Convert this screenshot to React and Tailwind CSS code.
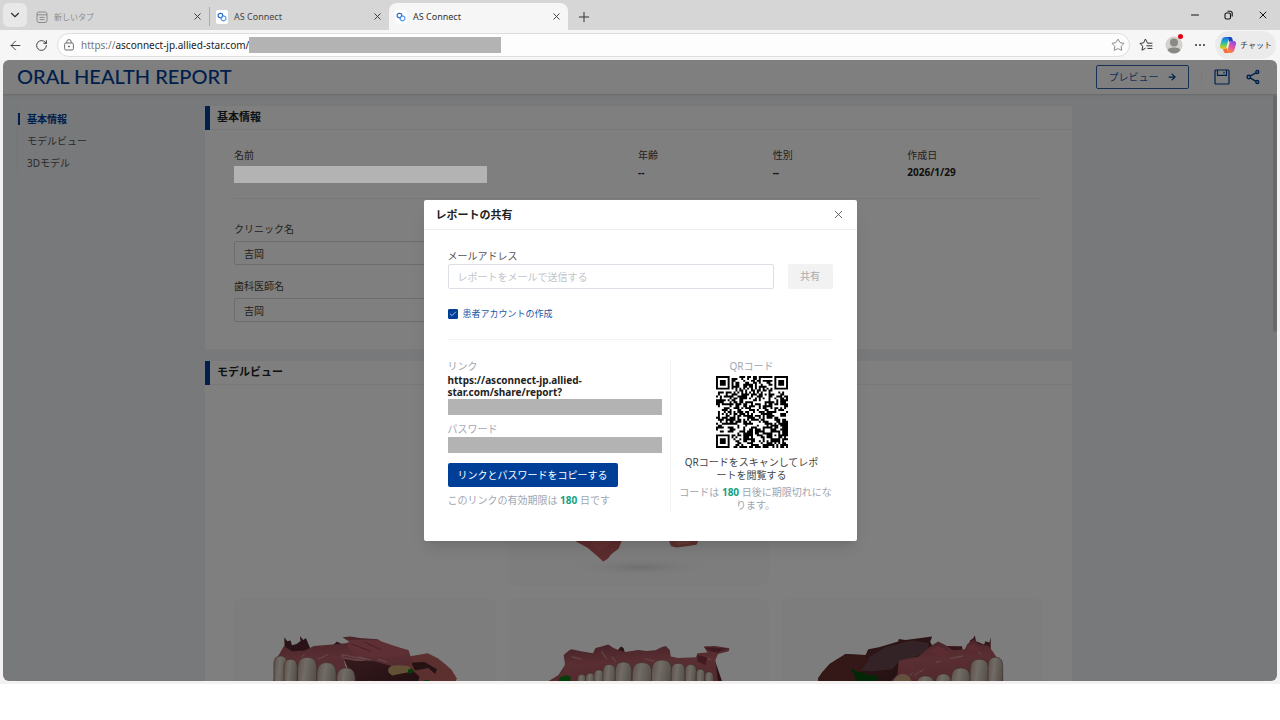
import { useState } from 'react';
import { ArrowLeft, ArrowRight, Check, ChevronDown, Minus, Plus, RotateCw, Star, X } from 'lucide-react';

const TABS = [
  { id: 'new', title: '新しいタブ', blank: true },
  { id: 'report', title: 'AS Connect' },
  { id: 'share', title: 'AS Connect', active: true },
];

const SECTIONS = ['基本情報', 'モデルビュー', '3Dモデル'];

const QR_SIZE = 37;

function inBox(x, y, left, top, size) {
  return x >= left && x < left + size && y >= top && y < top + size;
}

function ring(x, y, cx, cy) {
  return Math.max(Math.abs(x - cx), Math.abs(y - cy));
}

function buildQr() {
  let seed = 20260129;
  const next = () => {
    seed = (seed * 1103515245 + 12345) % 2147483648;
    return seed / 2147483648;
  };
  const last = QR_SIZE - 4;
  const finders = [[3, 3], [last, 3], [3, last]];
  let d = '';
  for (let y = 0; y < QR_SIZE; y++) {
    for (let x = 0; x < QR_SIZE; x++) {
      let dark = next() > 0.47;
      if (inBox(x, y, 13, 9, 3) || inBox(x, y, 5, 21, 4) || inBox(x, y, 26, 18, 3) || inBox(x, y, 14, 29, 3) || inBox(x, y, 34, 26, 4)) dark = true;
      if (x === 6 || y === 6) dark = (x + y) % 2 === 0;
      finders.forEach(([cx, cy]) => {
        const r = ring(x, y, cx, cy);
        if (r <= 4) dark = r !== 2 && r !== 4;
      });
      const align = ring(x, y, 30, 30);
      if (align <= 2) dark = align !== 1;
      if (dark) d += `M${x} ${y}h1v1h-1z`;
    }
  }
  return d;
}

const qrPath = buildQr();

function QrCode() {
  return (
    <svg viewBox="0 0 37 37" className="size-[72px]" role="img" aria-label="QRコード">
      <path d={qrPath} fill="#000" />
    </svg>
  );
}

function ConnectIcon() {
  return (
    <svg viewBox="0 0 12 14" className="h-3.5 w-3 shrink-0">
      <rect width="12" height="14" rx="2" fill="#fff" />
      <path d="M4.3 3.2 6.6 4v2.6L4.5 8 2.2 6.7V4.3z" fill="none" stroke="#1c5fc4" strokeWidth="1.1" strokeLinejoin="round" />
      <path d="M7.5 5.8 9.8 7v2.6L7.6 11 5.3 9.8V7.2z" fill="none" stroke="#4b93ee" strokeWidth="1.1" strokeLinejoin="round" />
    </svg>
  );
}

function PageIcon() {
  return (
    <svg viewBox="0 0 12 12" className="size-3 shrink-0" fill="none" stroke="#8a8a8a">
      <rect x="1" y="1" width="10" height="10.5" rx="2" />
      <path d="M1 3.8h10M3.5 6.4h5M3.5 8.6h5" />
    </svg>
  );
}

function LockIcon() {
  return (
    <svg viewBox="0 0 12 12" className="size-3 shrink-0" fill="none" stroke="#5f5f5f" strokeWidth="0.9">
      <rect x="1.6" y="4" width="8.8" height="7" rx="1.4" />
      <path d="M3.8 4V2.8a2.2 2.2 0 0 1 4.4 0V4" />
      <circle cx="6" cy="7.5" r="0.6" fill="#5f5f5f" />
    </svg>
  );
}

function FavoritesIcon() {
  return (
    <svg viewBox="0 0 14 14" className="size-3.5" fill="none" stroke="#333" strokeLinecap="round" strokeLinejoin="round">
      <path d="M8.4 4.8 6.4 1 4.6 4.9 1 5.4l2.7 2.8L3 12.2l3.2-1.8" />
      <path d="M8.8 5.2H13M7.8 7.8H13M8.8 10.4H13" />
    </svg>
  );
}

function CopilotIcon() {
  return (
    <svg viewBox="0 0 18 18" className="size-[18px]">
      <defs>
        <linearGradient id="cool" x1="0.3" y1="0" x2="0.3" y2="1">
          <stop offset="0" stopColor="#1b6fe0" />
          <stop offset="0.45" stopColor="#21b7c0" />
          <stop offset="0.75" stopColor="#8fcf3a" />
          <stop offset="1" stopColor="#f5c51c" />
        </linearGradient>
        <linearGradient id="warm" x1="0.7" y1="0" x2="0.3" y2="1">
          <stop offset="0" stopColor="#8a4be8" />
          <stop offset="0.5" stopColor="#e0569f" />
          <stop offset="1" stopColor="#fb8a3c" />
        </linearGradient>
      </defs>
      <path d="M6.5 1h3.7L7.4 11.2C7 12.500 6.400 13 5.200 13H3.500C1 13 .6 11 1.200 9l1.500-5C3.300 2 4.500 1 6.500 1z" fill="url(#cool)" />
      <path d="M11.500 17H7.800l2.800-10.200C11 5.500 11.600 5 12.800 5h1.700c2.500 0 2.900 2 2.300 4l-1.500 5c-.6 2-1.800 3-3.800 3z" fill="url(#warm)" />
      <path d="M8 1h3.500c1 0 1.500.6 1.800 1.500L14 5h-1.600c-1.100 0-1.700.5-2.200 1.500L9.600 3.500C9.300 2 8.900 1.300 8 1z" fill="#1546c0" />
      <path d="M10 17H6.500c-1 0-1.500-.6-1.800-1.500L4 13h1.400c1.200 0 1.900-.5 2.400-1.500l.6 3c.3 1.500.7 2.200 1.600 2.500z" fill="#f4703a" />
    </svg>
  );
}

function SaveIcon() {
  return (
    <svg viewBox="0 0 16 16" className="size-4" fill="none" stroke="#003f98" strokeWidth="1.2">
      <rect x="1" y="1" width="14" height="14" rx="1" />
      <path d="M3.500 1v5.300h9V1M10 2.800v1.800" />
    </svg>
  );
}

function ShareIcon() {
  return (
    <svg viewBox="0 0 14 16" className="h-4 w-3.5" fill="none" stroke="#003f98" strokeWidth="1.4">
      <path d="M4 7.200 10 3.800M4 8.800l6 3.600" />
      <circle cx="2.8" cy="8" r="1.7" />
      <circle cx="11.3" cy="3" r="1.5" />
      <circle cx="11.3" cy="13" r="1.5" />
    </svg>
  );
}

function BrowserTab({ tab }) {
  const look = tab.active ? 'bg-[#f6f6f6] text-[9px] text-[#333]' : tab.blank ? 'text-[8px] text-[#8a8a8a]' : 'text-[9px] text-[#444]';
  return (
    <div className={`flex w-[179px] items-center gap-1.5 rounded-t-lg px-1.5 ${look}`}>
      {tab.blank ? <PageIcon /> : <ConnectIcon />}
      <span className="flex-1">{tab.title}</span>
      <button type="button" aria-label="タブを閉じる"><X size={11} strokeWidth={2} color="#333" /></button>
    </div>
  );
}

function BrowserBar() {
  return (
    <header className="bg-[#f6f6f6]">
      <div className="flex h-[30px] items-stretch bg-[#d6d6d6] pt-[3px]">
        <button type="button" aria-label="タブの検索" className="mx-[3px] mb-[3px] flex w-6 items-center justify-center rounded-md bg-[#e8e8e8]">
          <ChevronDown size={14} strokeWidth={2} color="#333" />
        </button>
        <BrowserTab tab={TABS[0]} />
        <div className="my-1 w-px bg-[#aaa]"></div>
        <BrowserTab tab={TABS[1]} />
        <BrowserTab tab={TABS[2]} />
        <button type="button" aria-label="新しいタブ" className="ml-2"><Plus size={16} strokeWidth={1.5} color="#333" /></button>
        <div className="ml-auto flex items-center gap-[22px] pb-1 pr-[11px] text-[#111]">
          <button type="button" aria-label="最小化"><Minus size={12} /></button>
          <button type="button" aria-label="元に戻す">
            <svg viewBox="0 0 12 12" className="size-3" fill="none" stroke="#111" strokeWidth="1.1">
              <rect x="2" y="4" width="5.5" height="6" rx="1.5" />
              <path d="M4.500 2.300h2.700a2 2 0 0 1 2 2V7.500" />
            </svg>
          </button>
          <button type="button" aria-label="閉じる"><X size={12} /></button>
        </div>
      </div>

      <div className="flex h-[30px] items-center pl-2 pr-1">
        <button type="button" aria-label="戻る"><ArrowLeft size={15} strokeWidth={1.5} color="#333" /></button>
        <button type="button" aria-label="更新" className="ml-3"><RotateCw size={13} strokeWidth={1.7} color="#333" /></button>
        <div className="ml-[9px] flex h-6 flex-1 items-center rounded-full border border-[#dedede] bg-[#fdfdfd] pl-[5px] pr-1">
          <LockIcon />
          <span className="ml-1.5 text-[10px] text-[#222]"><span className="text-[#777]">https://</span>asconnect-jp.allied-star.com/</span>
          <div className="h-4 w-[252px] bg-[#b3b3b3]"></div>
          <button type="button" aria-label="お気に入りに追加" className="ml-auto"><Star size={14} strokeWidth={1.5} color="#777" /></button>
        </div>
        <button type="button" aria-label="お気に入り" className="ml-[9px]"><FavoritesIcon /></button>
        <button type="button" aria-label="プロファイル" className="relative ml-3">
          <svg viewBox="0 0 18 18" className="size-[18px]">
            <circle cx="9" cy="9" r="8.5" fill="#d3d1ce" />
            <circle cx="9" cy="6.5" r="4" fill="#8b8986" />
            <path d="M2.8 14.8c0-2.400 2-3.300 6.200-3.300s6.200.9 6.200 3.300A8.500 8.500 0 0 1 9 17.500a8.500 8.500 0 0 1-6.200-2.700z" fill="#8b8986" />
          </svg>
          <span className="absolute right-0 -top-0.5 size-[5px] rounded-full bg-[#e60012]"></span>
        </button>
        <button type="button" aria-label="設定など" className="ml-3 flex gap-0.5">
          <span className="size-0.5 rounded-full bg-[#333]"></span>
          <span className="size-0.5 rounded-full bg-[#333]"></span>
          <span className="size-0.5 rounded-full bg-[#333]"></span>
        </button>
        <button type="button" className="ml-2.5 flex h-7 items-center gap-[3px] rounded-full bg-[#ebebeb] pl-1 pr-1">
          <CopilotIcon />
          <span className="text-[8px] text-[#333]">チャット</span>
        </button>
      </div>
    </header>
  );
}

function ReportHeader() {
  return (
    <div className="flex h-[34px] items-center bg-white pl-[14px] pr-[17px] shadow-sm">
      <h1 className="pb-0.5 font-['Lato',sans-serif] text-[20px] leading-6 font-medium text-[#003f98]">ORAL HEALTH REPORT</h1>
      <button type="button" className="ml-auto flex h-6 w-[93px] items-center justify-center gap-2 rounded-xs border border-[#2f62ad] text-[10px] text-[#2f62ad]">
        プレビュー
        <ArrowRight size={10} strokeWidth={3} color="#003f98" />
      </button>
      <div className="ml-3 h-3 w-px bg-[#f2f2f2]"></div>
      <button type="button" aria-label="保存" className="ml-3"><SaveIcon /></button>
      <button type="button" aria-label="共有" className="ml-4"><ShareIcon /></button>
    </div>
  );
}

function SectionNav() {
  return (
    <nav className="w-[202px] shrink-0 pl-[14px] pt-[14px]">
      <ul className="border-l border-[#e4e8ee] text-[10px] leading-[22px] text-[#555]">
        {SECTIONS.map((name, i) => (
          <li key={name} className="flex items-center">
            <span className={i === 0 ? 'h-3 w-0.5 bg-[#003f98]' : 'h-3 w-0.5'}></span>
            <a href="#report" className={i === 0 ? 'ml-[7px] font-bold text-[#003f98]' : 'ml-[7px]'}>{name}</a>
          </li>
        ))}
      </ul>
    </nav>
  );
}

function CardTitle({ children }) {
  return (
    <h2 className="flex h-6 items-center border-b border-[#f0f0f0] text-[11px] font-bold text-[#222]">
      <span className="mr-[7px] h-6 w-[5px] bg-[#003f98]"></span>
      {children}
    </h2>
  );
}

function Fact({ label, value }) {
  return (
    <div className="text-[10px] leading-[17px] text-[#444]">
      <div>{label}</div>
      <div className="font-bold text-[#222]">{value}</div>
    </div>
  );
}

function TextRow({ id, label, value }) {
  return (
    <div className="w-1/2">
      <label htmlFor={id} className="block text-[10px] leading-6 text-[#444]">{label}</label>
      <input id={id} defaultValue={value} className="block h-6 w-full rounded-xs border border-[#d5d9de] bg-white px-[9px] text-[10px] text-[#444]" />
    </div>
  );
}

// Gradients shared by all four models
function ModelDefs() {
  return (
    <svg className="absolute size-0" aria-hidden="true">
      <defs>
        <linearGradient id="tooth" x1="0" y1="0" x2="1" y2="0.4">
          <stop offset="0" stopColor="#b39c8e" />
          <stop offset="0.4" stopColor="#e4d8cc" />
          <stop offset="1" stopColor="#a3978d" />
        </linearGradient>
        <linearGradient id="gum" x1="0" y1="0" x2="0.2" y2="1">
          <stop offset="0" stopColor="#8a454e" />
          <stop offset="0.5" stopColor="#b45d66" />
          <stop offset="1" stopColor="#a8545a" />
        </linearGradient>
        <linearGradient id="inner" x1="0" y1="0" x2="1" y2="1">
          <stop offset="0" stopColor="#6e3539" />
          <stop offset="1" stopColor="#3a1a1e" />
        </linearGradient>
        <radialGradient id="shade">
          <stop offset="0" stopColor="#dcdcdc" />
          <stop offset="1" stopColor="#fafafa" stopOpacity="0" />
        </radialGradient>
      </defs>
    </svg>
  );
}

function Teeth({ items }) {
  return items.map(([x, y, r]) => (
    <path
      key={x}
      d={`M${x - r} 520V${y + r * 1.3}C${x - r} ${y + r * 0.4} ${x - r * 0.7} ${y} ${x} ${y}S${x + r} ${y + r * 0.4} ${x + r} ${y + r * 1.3}V520z`}
      fill="url(#tooth)"
      stroke="#7b5650"
      strokeWidth="2"
    />
  ));
}

function Model({ viewBox, label, children }) {
  return (
    <div className="aspect-[262/174] overflow-hidden rounded-lg bg-[#fafafa]">
      <svg viewBox={viewBox} className="size-full" role="img" aria-label={label}>{children}</svg>
    </div>
  );
}

function ModelGrid() {
  return (
    <div className="grid grid-cols-3 gap-3 px-[29px] pt-[27px]">
      <ModelDefs />
      <div className="col-start-2">
        <Model viewBox="909 -384 786 522" label="正面">
          <ellipse cx="1305" cy="82" rx="215" ry="26" fill="url(#shade)" />
          <path d="M1090-30 1108 2l40 22 28 24 19 17 14-8 10-14 22-16 8-20 4-37z" fill="#b8585c" />
          <path d="M1150-20 1160 14l22 18 30-18 14-34z" fill="#c46263" />
          <path d="M1385-20l8 24 6 15 16 4 30-4 30-4 8-16-2-19z" fill="#b8635f" />
          <path d="M1410 4l50-4-10 12-32 4z" fill="#cc776d" />
        </Model>
      </div>
      <div className="col-start-1">
        <Model viewBox="88 174 786 522" label="右側面">
          <path d="M600 352 670 340 700 355 722 372 742 390 757 415 740 470H560z" fill="#b7605f" />
          <path d="M620 368l40-2 38 22-6 14-20-18-40 8z" fill="#4a2426" />
          <path d="M236 340 240 322 239 292 248 304 258 302 262 316 276 312 288 303 286 288 296 300 304 294 318 328 260 345z" fill="#55272d" />
          <path d="M383 318l14-13 16 8 2 12z" fill="#55272d" />
          <path d="M205 430 220 350 238 318 262 334 300 332 328 318 384 314 424 310 436 306 414 292 438 290 466 294 520 298 540 312 578 322 612 330 618 348 626 368 600 392 540 380 470 362 418 362 440 430z" fill="url(#gum)" />
          <path d="M434 300 520 301 600 328 612 345 560 352 500 350 455 345 430 322z" fill="#bd606b" />
          <path d="M418 358 450 362 510 364 560 378 625 392 645 410 632 470H450L436 400z" fill="url(#inner)" />
          <path d="M552 386q6-10 28-10l32 2q12 10 4 18l-32 6-20 5q-16-8-12-21z" fill="#c9a06e" />
          <path d="M412 344l30 6 40 8-8 4-60-8zM462 350l36 10M520 358l28 8M340 358l30-14M292 350l8-6" fill="none" stroke="#cf98a0" strokeWidth="3" />
          <path d="M440 312l60 22M480 306l50 24" stroke="#8a3e4b" strokeWidth="3" />
          <Teeth items={[[228, 348, 20], [258, 358, 20], [308, 352, 29], [366, 368, 29], [424, 384, 28]]} />
          <path d="M480 430q10-10 24-6v10z" fill="#c9a06e" />
          <path d="M612 388l12-2 2 10-8 6-8-6zM660 420h14v10h-14z" fill="#0b7a17" />
        </Model>
      </div>
      <Model viewBox="909 174 786 522" label="咬合面">
        <path d="M1030 424 1060 406 1078 378 1098 400 1120 440H1030z" fill="#a9565a" />
        <path d="M1238 332l10-12 8 4 4 14zM1530 360l24 70h-40z" fill="#55272d" />
        <path d="M1070 410 1080 372 1076 345 1092 332 1100 328 1128 334 1164 340 1172 324 1190 320 1210 314 1226 324 1240 330 1262 336 1300 330 1325 333 1352 331 1370 322 1383 318 1395 330 1398 350 1420 354 1474 352 1478 340 1508 338 1497 320 1530 318 1574 325 1572 334 1540 342 1532 360 1534 382 1540 430H1072z" fill="url(#gum)" />
        <path d="M1100 350l30 8M1190 334l16 24M1220 350l12 14M1320 356l28 8M1500 352l20 8" stroke="#cb8088" strokeWidth="4" />
        <path d="M1498 322l70 4-30 12-20-4zM1478 345l30 8-6 22-24-10z" fill="#7e3540" />
        <Teeth items={[[1130, 404, 13], [1156, 400, 14], [1182, 390, 15], [1213, 374, 19], [1256, 366, 25], [1312, 368, 30], [1371, 360, 31], [1420, 370, 21], [1458, 374, 17], [1487, 388, 13], [1513, 396, 13]]} />
        <path d="M1066 412l16-6 14 4 2 14h-38z" fill="#0b7a17" />
      </Model>
      <Model viewBox="426 174 786 522" label="左側面">
        <path d="M537 416 550 396 572 372 620 342 680 345 688 328 720 322 778 305 780 297 800 300 880 290 874 306 890 330 780 470H545z" fill="url(#inner)" />
        <path d="M664 392 690 352 740 322 820 302 872 310 860 340 780 366 760 388 700 394z" fill="#68474c" />
        <path d="M537 416 572 372 620 342 676 346 690 360 664 396 640 430H545z" fill="#69302f" />
        <path d="M920 318l50 1 2 14-20 6zM985 330 994 302 1004 294 1008 286 1012 304 1036 314 1040 304 1052 308 1056 292 1056 330z" fill="#6e2e37" />
        <path d="M750 430 776 404 780 362 840 350 870 322 898 305 925 318 940 332 978 328 986 312 1006 298 1018 312 1050 318 1066 340 1078 360 1090 392 1092 430z" fill="url(#gum)" />
        <path d="M870 332l30-14 30 20-24 16zM985 318l20-6 20 18-30 8z" fill="#b95964" />
        <path d="M812 408l10-10M826 408l14-12M842 396l12-6M935 356l38-8M890 368l14-4M1018 336l10 8" stroke="#cf9aa1" strokeWidth="3" />
        <path d="M762 430q8-28 30-28t28 28z" fill="#c9a37c" />
        <Teeth items={[[860, 408, 28], [914, 402, 24], [966, 384, 29], [1022, 358, 28], [1070, 352, 22]]} />
        <path d="M634 392l10-6 6 8 22 4 20 8 26 2-4 14-30 6H652l-6-24z" fill="#064f0a" />
      </Model>
    </div>
  );
}

function ShareDialog() {
  const [email, setEmail] = useState('');
  const [account, setAccount] = useState(true);

  return (
    <div role="dialog" aria-label="レポートの共有" className="w-[433px] rounded-xs bg-white text-[10px] shadow-lg">
      <div className="flex h-[30px] items-center justify-between border-b border-[#f0f0f0] px-3">
        <h2 className="pt-px text-[11px] font-bold text-[#222]">レポートの共有</h2>
        <button type="button" aria-label="閉じる"><X size={13} strokeWidth={1.5} color="#444" /></button>
      </div>

      <div className="px-6 pb-[29px] pt-[18px]">
        <label htmlFor="email" className="block leading-4 text-[#555]">メールアドレス</label>
        <div className="flex gap-3.5">
          <input
            id="email"
            type="email"
            value={email}
            onChange={(e) => setEmail(e.target.value)}
            placeholder="レポートをメールで送信する"
            className="h-[25px] min-w-0 flex-1 rounded-xs border border-[#dcdfe6] px-[9px] placeholder:text-[#c0c4cc]"
          />
          <button type="button" disabled={!email} className="w-[45px] rounded-xs bg-[#f2f2f2] text-[#aaa]">共有</button>
        </div>

        <div className="mt-[19px] flex items-center gap-[5px]">
          <span className="relative flex">
            <input
              id="account"
              type="checkbox"
              checked={account}
              onChange={(e) => setAccount(e.target.checked)}
              className="size-2.5 appearance-none rounded-[1px] border border-[#003f98] checked:bg-[#003f98]"
            />
            {account && <Check size={8} strokeWidth={2} className="pointer-events-none absolute left-px top-px text-white" />}
          </span>
          <label htmlFor="account" className="text-[9px] leading-3 text-[#1c55a5]">患者アカウントの作成</label>
        </div>

        <div className="mt-[19px] flex border-t border-[#f0f2f5] pt-5">
          <div className="w-[223px] border-r border-[#f0f2f5] pr-2">
            <div className="leading-3 text-[#a0a6b0]">リンク</div>
            <div className="mt-0.5 leading-3 font-bold text-[#222]">https://asconnect-jp.allied-<br />star.com/share/report?</div>
            <div className="mt-px h-4 bg-[#b3b3b3]"></div>
            <div className="mt-2 leading-3 text-[#a0a6b0]">パスワード</div>
            <div className="mt-0.5 h-4 bg-[#b3b3b3]"></div>
            <button type="button" className="mt-2.5 h-6 w-[170px] rounded-xs bg-[#003f98] text-white">リンクとパスワードをコピーする</button>
            <div className="mt-[7px] leading-3 text-[#a0a6b0]">このリンクの有効期限は <b className="text-[#12a182]">180</b> 日です</div>
          </div>
          <div className="flex flex-1 flex-col items-center text-center">
            <div className="leading-3 text-[#a0a6b0]">QRコード</div>
            <div className="mt-1"><QrCode /></div>
            <p className="mt-2 leading-[13px] text-[#444]">QRコードをスキャンしてレポ<br />ートを閲覧する</p>
            <p className="mt-1 pl-2 leading-[13px] text-[#a0a6b0]">コードは <b className="text-[#12a182]">180</b> 日後に期限切れにな<br />ります。</p>
          </div>
        </div>
      </div>
    </div>
  );
}

export default function App() {
  return (
    <div lang="ja" className="flex h-screen flex-col bg-white font-['Noto_Sans','Noto_Sans_CJK_JP',sans-serif]">
      <BrowserBar />
      <div className="mb-9 flex min-h-0 flex-1 flex-col bg-[#f3f1f1] px-[3px] pb-[3px]">
        <main id="report" className="relative min-h-0 flex-1 overflow-hidden rounded-md bg-[#eff2f6]">
          <ReportHeader />
          <div className="flex">
            <SectionNav />
            <div className="max-w-[867px] flex-1 pt-3">
              <section className="bg-white pb-[27px]">
                <CardTitle>基本情報</CardTitle>
                <div className="pl-[29px] pr-[30px] pt-[17px]">
                  <div className="grid grid-cols-6 border-b border-[#f0f0f0] pb-[15px]">
                    <div className="col-span-3 text-[10px] leading-[17px] text-[#444]">
                      <div>名前</div>
                      <div className="relative z-20 mt-0.5 h-[17px] w-[253px] bg-[#b3b3b3]"></div>
                    </div>
                    <Fact label="年齢" value="--" />
                    <Fact label="性別" value="--" />
                    <Fact label="作成日" value="2026/1/29" />
                  </div>
                  <div className="flex flex-col gap-[9px] pt-[18px]">
                    <TextRow id="clinic" label="クリニック名" value="吉岡" />
                    <TextRow id="dentist" label="歯科医師名" value="吉岡" />
                  </div>
                </div>
              </section>
              <section className="mt-3 bg-white pb-7">
                <CardTitle>モデルビュー</CardTitle>
                <ModelGrid />
              </section>
            </div>
          </div>
          <div className="absolute right-0 top-[35px] h-[237px] w-1 rounded-full bg-[#cfd2d6]"></div>
          <div className="absolute inset-0 z-10 bg-black/50"></div>
          <div className="absolute inset-x-0 top-[140px] z-30 flex justify-center">
            <ShareDialog />
          </div>
        </main>
      </div>
    </div>
  );
}
